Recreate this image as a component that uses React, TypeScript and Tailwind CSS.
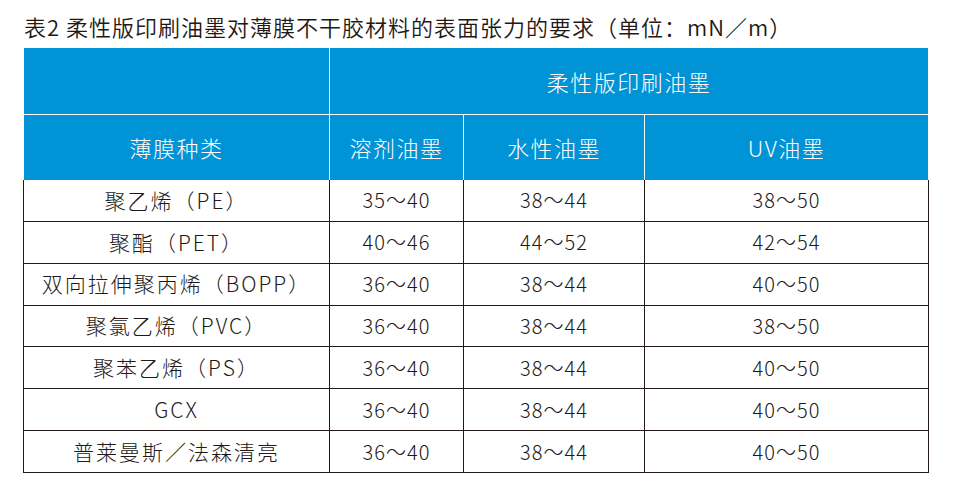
import React from 'react';

const rows: string[][] = [
  ['聚乙烯（PE）', '35～40', '38～44', '38～50'],
  ['聚酯（PET）', '40～46', '44～52', '42～54'],
  ['双向拉伸聚丙烯（BOPP）', '36～40', '38～44', '40～50'],
  ['聚氯乙烯（PVC）', '36～40', '38～44', '38～50'],
  ['聚苯乙烯（PS）', '36～40', '38～44', '40～50'],
  ['GCX', '36～40', '38～44', '40～50'],
  ['普莱曼斯／法森清亮', '36～40', '38～44', '40～50'],
];

export default function App() {
  return (
    <div
      className="w-[957px] h-[491px] bg-white pl-[23px] text-[#231815] font-light"
      style={{ fontFamily: '"Noto Sans CJK SC", "Noto Sans", sans-serif' }}
    >
      <div className="h-[48px] flex items-center pt-[4px] pl-[1px] text-[22px] leading-[26px] tracking-[1px] font-[350] whitespace-nowrap">
        表2 柔性版印刷油墨对薄膜不干胶材料的表面张力的要求（单位：mN／m）
      </div>
      <div className="ml-[1px] w-[904px] grid grid-cols-[305px_133px_180px_283px] gap-px bg-white text-white text-[22px] tracking-[1.5px]">
        <div className="h-[66px] bg-[#0093d6]" />
        <div className="col-span-3 h-[66px] bg-[#0093d6] flex items-center justify-center">柔性版印刷油墨</div>
        <div className="h-[65px] bg-[#0093d6] flex items-center justify-center">薄膜种类</div>
        <div className="h-[65px] bg-[#0093d6] flex items-center justify-center">溶剂油墨</div>
        <div className="h-[65px] bg-[#0093d6] flex items-center justify-center">水性油墨</div>
        <div className="h-[65px] bg-[#0093d6] flex items-center justify-center">UV油墨</div>
      </div>
      <div className="w-[906px] h-[293px] grid grid-rows-7 border-l border-[#231815]">
        {rows.map((r, i) => (
          <div key={i} className="grid grid-cols-[306px_134px_181px_284px] border-b border-[#231815]">
            {r.map((c, j) => (
              <div
                key={j}
                className={
                  'flex items-center justify-center border-r border-[#231815] whitespace-nowrap ' +
                  (j === 0 ? 'text-[21px] tracking-[2px]' : 'text-[20px] tracking-[1px]')
                }
              >
                {c}
              </div>
            ))}
          </div>
        ))}
      </div>
    </div>
  );
}
